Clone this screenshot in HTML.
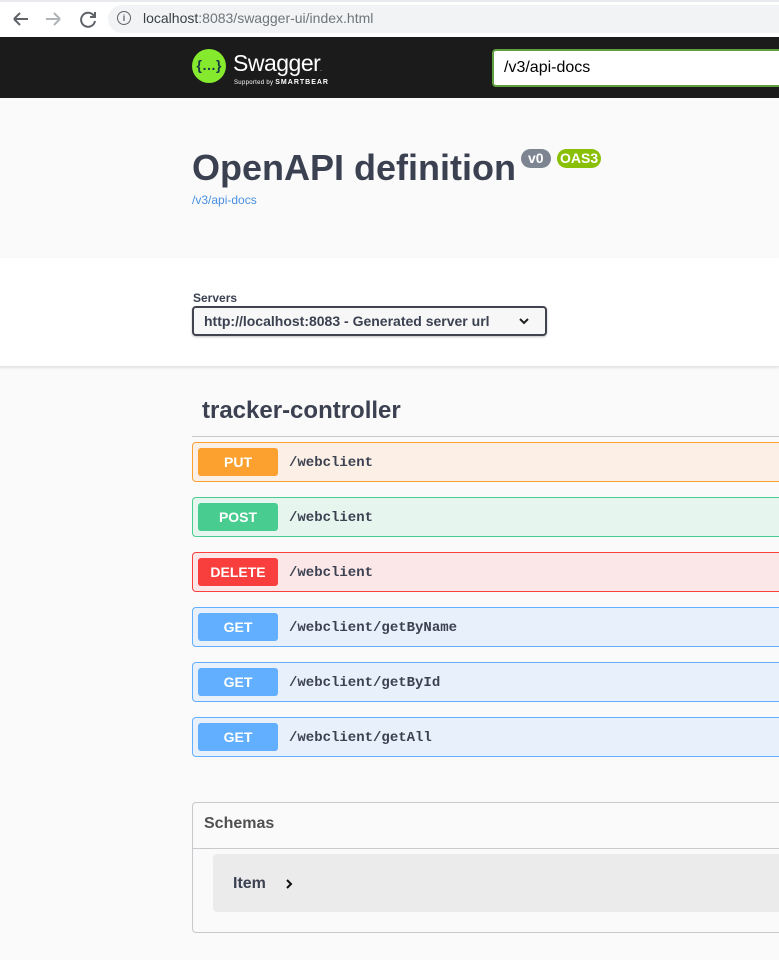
<!DOCTYPE html>
<html><head><style>
body{margin:0;width:779px;height:960px;overflow:hidden;background:#fafafa;font-family:"Liberation Sans",sans-serif;position:relative}
.abs{position:absolute}
.op{position:absolute;left:192px;width:600px;height:38px;border:1px solid;border-radius:4px}
.op .b{position:absolute;left:5px;top:5px;width:80px;height:28px;border-radius:3px;color:#fff;font-weight:bold;font-size:14px;text-align:center;line-height:28px}
.op .p{position:absolute;left:96px;top:1px;line-height:39px;font-family:"Liberation Mono",monospace;font-weight:bold;font-size:14px;color:#3b4151}
</style></head><body>
<div class="abs" style="left:0;top:0;width:779px;height:37px;background:#fff;border-top:2px solid #e8eaed;box-sizing:border-box"></div>
<svg class="abs" style="left:10px;top:8px" width="90" height="22"><g fill="none" stroke-width="2"><path d="M4 11h14M4 11l6-6M4 11l6 6" stroke="#5f6368"/><path d="M36 11h14M50 11l-6-6M50 11l-6 6" stroke="#b0b3b8"/><path d="M84 8a7 7 0 1 0 1 5" stroke="#5f6368"/><path d="M85 4v5h-5" stroke="#5f6368"/></g></svg>
<div class="abs" style="left:108px;top:5px;width:700px;height:28px;background:#f1f3f4;border-radius:14px"></div>
<div class="abs" style="left:117px;top:11px;width:12px;height:12px;border:1.5px solid #5f6368;border-radius:50%;font-size:9px;line-height:12px;text-align:center;color:#5f6368;font-weight:bold">i</div>
<div class="abs" style="left:143px;top:10px;font-size:14px;color:#3c4043">localhost<span style="color:#70757a">:8083/swagger-ui/index.html</span></div>
<div class="abs" style="left:0;top:37px;width:779px;height:61px;background:#1b1b1b"></div>
<div class="abs" style="left:192px;top:49px;width:34px;height:34px;border-radius:50%;background:#85ea2d;color:#173647;font-weight:bold;font-size:14px;text-align:center;line-height:33px">{…}</div>
<div class="abs" style="left:233px;top:50px;color:#fff;font-size:23px;letter-spacing:-0.5px">Swagger<span style="font-size:6px">.</span></div>
<div class="abs" style="left:234px;top:79px;color:#fff;font-size:6px;letter-spacing:.3px">Supported by <b style="font-size:7px;letter-spacing:1px">SMARTBEAR</b></div>
<div class="abs" style="left:492px;top:49px;width:300px;height:38px;box-sizing:border-box;border:2px solid #62a03f;border-radius:4px;background:#fff;font-size:16px;line-height:34px;padding-left:10px;color:#000">/v3/api-docs</div>
<div class="abs" style="left:192px;top:147px;font-size:36px;font-weight:bold;color:#3b4151">OpenAPI definition</div>
<div class="abs" style="left:521px;top:149px;height:19px;line-height:19px;background:#7d8492;color:#fff;font-size:14px;font-weight:bold;border-radius:10px;padding:0 7px">v0</div>
<div class="abs" style="left:557px;top:149px;height:19px;line-height:19px;background:#89bf04;color:#fff;font-size:14px;font-weight:bold;border-radius:10px;padding:0 3px">OAS3</div>
<div class="abs" style="left:192px;top:193px;font-size:12px;color:#4990e2">/v3/api-docs</div>
<div class="abs" style="left:0;top:258px;width:779px;height:108px;background:#fff;border-bottom:1px solid #e5e5e5;box-shadow:0 1px 2px rgba(0,0,0,.1)"></div>
<div class="abs" style="left:193px;top:291px;font-size:12px;font-weight:bold;color:#3b4151">Servers</div>
<div class="abs" style="left:192px;top:306px;width:355px;height:30px;box-sizing:border-box;border:2px solid #41444e;border-radius:4px;background:#f7f7f7;box-shadow:0 1px 2px rgba(0,0,0,.25);font-size:14px;font-weight:bold;color:#3b4151;line-height:26px;padding-left:10px">http://localhost:8083 - Generated server url</div>
<svg class="abs" style="left:518px;top:316px" width="12" height="10"><path d="M2 3l4 4 4-4" fill="none" stroke="#222" stroke-width="2"/></svg>
<div class="abs" style="left:202px;top:397px;font-size:24px;font-weight:bold;color:#3b4151">tracker-controller</div>
<div class="abs" style="left:192px;top:436px;width:600px;height:1px;background:#c8c9cc"></div>
<div class="op" style="top:442px;background:#fcf0e6;border-color:#fca130"><div class="b" style="background:#fca130">PUT</div><div class="p">/webclient</div></div>
<div class="op" style="top:497px;background:#e7f5ef;border-color:#49cc90"><div class="b" style="background:#49cc90">POST</div><div class="p">/webclient</div></div>
<div class="op" style="top:552px;background:#fbe7e7;border-color:#f93e3e"><div class="b" style="background:#f93e3e">DELETE</div><div class="p">/webclient</div></div>
<div class="op" style="top:607px;background:#e8f1fb;border-color:#61affe"><div class="b" style="background:#61affe">GET</div><div class="p">/webclient/getByName</div></div>
<div class="op" style="top:662px;background:#e8f1fb;border-color:#61affe"><div class="b" style="background:#61affe">GET</div><div class="p">/webclient/getById</div></div>
<div class="op" style="top:717px;background:#e8f1fb;border-color:#61affe"><div class="b" style="background:#61affe">GET</div><div class="p">/webclient/getAll</div></div>
<div class="abs" style="left:192px;top:802px;width:620px;height:129px;border:1px solid #c8c9cc;border-radius:4px"></div>
<div class="abs" style="left:193px;top:848px;width:600px;height:1px;background:#c8c9cc"></div>
<div class="abs" style="left:204px;top:815px;font-size:16px;font-weight:bold;color:#505050">Schemas</div>
<div class="abs" style="left:213px;top:854px;width:600px;height:58px;background:#ebebeb;border-radius:4px"></div>
<div class="abs" style="left:233px;top:875px;font-size:16px;font-weight:bold;color:#3b4151">Item</div>
<svg class="abs" style="left:285px;top:878px" width="10" height="12"><path d="M2 2l4 4-4 4" fill="none" stroke="#111" stroke-width="2"/></svg>
</body></html>
